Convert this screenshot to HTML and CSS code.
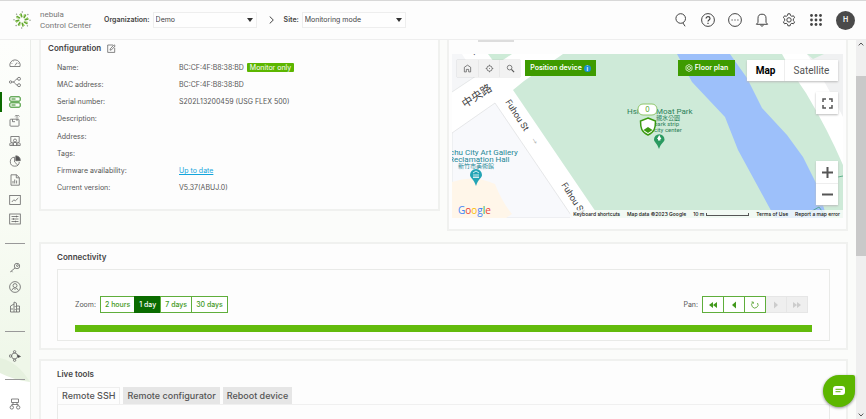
FILE: index.html
```html
<!DOCTYPE html>
<html lang="en">
<head>
<meta charset="utf-8">
<title>Nebula Control Center</title>
<link rel="stylesheet" href="styles.css">
</head>
<body>
<header class="topbar">
  <a class="brand" href="#">
    <svg class="brand-mark" viewBox="0 0 18 18" aria-hidden="true">
      <g stroke-linecap="round" fill="none">
        <g id="ray"><path d="M8.800 5.800L8 3" stroke="#63a82f" stroke-width="1.500"/><path d="M10.800 5.400L11.300 3.400" stroke="#9acb5c" stroke-width=".9"/><circle cx="9.300" cy="1" r=".7" fill="#8a9485"/></g>
        <use href="#ray" transform="rotate(45 9 9)"/><use href="#ray" transform="rotate(90 9 9)"/><use href="#ray" transform="rotate(135 9 9)"/><use href="#ray" transform="rotate(180 9 9)"/><use href="#ray" transform="rotate(225 9 9)"/><use href="#ray" transform="rotate(270 9 9)"/><use href="#ray" transform="rotate(315 9 9)"/>
      </g>
    </svg>
    <span class="brand-name">nebula<br>Control Center</span>
  </a>
  <div class="picker">
    <label for="org">Organization:</label>
    <span class="select-box"><select id="org"><option>Demo</option></select><svg viewBox="0 0 6 4" aria-hidden="true"><path d="M0 0h6L3 4z"/></svg></span>
  </div>
  <svg class="crumb" viewBox="0 0 5 8" aria-hidden="true"><path d="M.7.5L4.300 4 .7 7.500" fill="none" stroke="#444"/></svg>
  <div class="picker">
    <label for="site">Site:</label>
    <span class="select-box"><select id="site"><option>Monitoring mode</option></select><svg viewBox="0 0 6 4" aria-hidden="true"><path d="M0 0h6L3 4z"/></svg></span>
  </div>
  <nav class="actions" aria-label="Account tools">
    <button aria-label="Search"><svg viewBox="0 0 14 14"><circle cx="6.700" cy="5.500" r="4.800"/><path d="M8.800 9.800l2.300 3.500"/></svg></button>
    <button aria-label="Help"><svg viewBox="0 0 14 14"><circle cx="7" cy="7" r="6.400"/><path d="M5.100 5.600c0-2.700 3.900-2.500 3.900-.2C9 7 7 6.900 7 8.600M7 9.800v1.100" stroke-width="1.200"/></svg></button>
    <button aria-label="More"><svg viewBox="0 0 14 14"><circle cx="7" cy="7" r="6.400"/><path d="M3.500 7h1.200M6.400 7h1.200M9.300 7h1.200" stroke-width="1.200"/></svg></button>
    <button aria-label="Notifications"><svg viewBox="0 0 14 14"><path d="M1.400 11.300h11.200L11 9.300V5.200a4 4 0 0 0-8 0v4.100zM5.600 12.200a1.500 1.500 0 0 0 2.800 0"/></svg></button>
    <button aria-label="Settings"><svg viewBox="0 0 14 14"><path d="M5.900.8h2.200l.4 1.700 1.300.8 1.700-.5 1.100 1.900-1.300 1.200v1.800l1.300 1.200-1.100 1.900-1.700-.5-1.300.8-.4 1.700H5.900l-.4-1.700-1.300-.8-1.700.5-1.100-1.900 1.300-1.200V5.900L1.400 4.700l1.100-1.900 1.700.5 1.300-.8z"/><circle cx="7" cy="6.900" r="2.200"/></svg></button>
    <button aria-label="Apps"><svg class="dots" viewBox="0 0 14 14"><circle cx="2.500" cy="2.500" r="1.400"/><circle cx="7" cy="2.500" r="1.400"/><circle cx="11.500" cy="2.500" r="1.400"/><circle cx="2.500" cy="7" r="1.400"/><circle cx="7" cy="7" r="1.400"/><circle cx="11.500" cy="7" r="1.400"/><circle cx="2.500" cy="11.500" r="1.400"/><circle cx="7" cy="11.500" r="1.400"/><circle cx="11.500" cy="11.500" r="1.400"/></svg></button>
    <button class="avatar" aria-label="Profile">H</button>
  </nav>
</header>

<div class="workspace">
  <nav class="sidebar" aria-label="Main">
    <svg class="swoosh" viewBox="0 0 30 379" preserveAspectRatio="none" aria-hidden="true"><path d="M0 318Q18 322 30 342V343Q14 340 0 334z" fill="#e6f1df"/><path d="M0 333Q14 340 30 342V379H0z" fill="#fff"/></svg>
    <div class="nav-group nine">
      <a href="#" aria-label="Dashboard"><svg viewBox="0 0 12 12"><path d="M1 9.500a5.200 5.200 0 1 1 10 0zM6 8.500l2-3M2.600 6.500h.7M4 4.200l.4.4M8.800 6.500h.7"/></svg></a>
      <a href="#" aria-label="Topology"><svg viewBox="0 0 12 12"><circle cx="1.600" cy="6" r="1.200"/><circle cx="10" cy="2.800" r="1.500"/><circle cx="10" cy="9.200" r="1.500"/><path d="M2.800 6h1.400c2 0 2-3.200 4.200-3.200M4.200 6c2 0 2 3.200 4.200 3.200"/></svg></a>
      <a href="#" class="active" aria-label="Devices"><svg viewBox="0 0 12 12"><rect x=".8" y=".8" width="10.400" height="4.400" rx="1"/><rect x=".8" y="6.800" width="10.400" height="4.400" rx="1"/><path d="M2.500 3h4M2.500 9h4" /></svg></a>
      <a href="#" aria-label="Site-wide"><svg viewBox="0 0 12 12"><rect x="1" y="4.200" width="9" height="7" rx=".8"/><path d="M3.500 4.200v2.500h2.500M8 6V3.500M6.800 2.600a1.500 1.500 0 0 1 2.500 0M5.800 1.400a3 3 0 0 1 4.700 0"/></svg></a>
      <a href="#" aria-label="Clients"><svg viewBox="0 0 12 12"><path d="M1.800 7V1.500h8.400V7M.8 10.500V8.500L3.200 7v3.500zM8.800 10.500V7l2.400 1.500v2zM3.200 10.500h5.600M4.500 10.500V7.500h3v3"/><circle cx="6" cy="5.500" r="1.500"/></svg></a>
      <a href="#" aria-label="Usage"><svg viewBox="0 0 12 12"><path d="M5.600 2.200A4.500 4.500 0 1 0 10.300 7M5.600 2.200V7l3.200 3.200"/><path d="M6.800.8a4.900 4.900 0 0 1 4.500 4.900H6.800z" fill="#555"/></svg></a>
      <a href="#" aria-label="Reports"><svg viewBox="0 0 12 12"><path d="M2 .8h5.500L10.300 3.500v7.700H2zM7.300.8v3h3M4 9.500V7M5.700 9.500V5.500M7.600 9.500V6.500" /></svg></a>
      <a href="#" aria-label="Monitor"><svg viewBox="0 0 12 12"><rect x=".7" y="1.500" width="10.600" height="9"/><path d="M2.800 8l2-2.200 1.500 1L9.300 4"/></svg></a>
      <a href="#" aria-label="Configure"><svg viewBox="0 0 12 12"><rect x=".7" y="1" width="10.600" height="10"/><path d="M2.500 3.500h7M2.500 6h7M2.500 8.500h7M7.500 2.700v1.600M4.500 5.200v1.600M6.500 7.700v1.600"/></svg></a>
    </div>
    <div class="nav-group three">
      <a href="#" aria-label="Licences"><svg viewBox="0 0 12 12"><circle cx="8" cy="4" r="2.700"/><circle cx="8.400" cy="3.600" r=".9"/><path d="M6 6L1.200 10M2.500 9l1 1.200"/></svg></a>
      <a href="#" aria-label="Account"><svg viewBox="0 0 12 12"><circle cx="6" cy="6" r="5.400"/><circle cx="6" cy="4.600" r="2"/><path d="M2.600 9.500L4.500 7 6 8.500 7.500 7l1.900 2.500"/></svg></a>
      <a href="#" aria-label="Organization"><svg viewBox="0 0 12 12"><path d="M1.500 11V5L5 3v8M5 3l.1-2 2.400 1.200V11M7.500 5H10.500v6H1.500M3 7v2M6.200 5v1M6.200 8v1M9 7v2"/></svg></a>
    </div>
    <div class="nav-group one">
      <a href="#" aria-label="Community"><svg viewBox="0 0 12 12"><circle cx="5.600" cy="6" r="3"/><circle cx="5.600" cy="1.800" r="1.200"/><circle cx="1.400" cy="6" r="1.200"/><circle cx="5.600" cy="10.200" r="1.200"/><path d="M8.500 4.800l3 1.700-2.500 1z" fill="#333"/></svg></a>
    </div>
    <div class="nav-group one last">
      <a href="#" aria-label="Network"><svg viewBox="0 0 12 12"><path d="M2.500 1h7v3.500h-7zM4 4.500v2H2.800v1.200M8 4.500v2h1.200v1.200M4 6.500h4"/><circle cx="2.800" cy="9.400" r="1.700"/><circle cx="9.200" cy="9.400" r="1.700"/></svg></a>
    </div>
  </nav>

  <main class="content">
    <div class="columns">
      <section class="card config">
        <h2>Configuration <button class="edit" aria-label="Edit"><svg viewBox="0 0 9 9"><path d="M6 1H.7v7.400h7V3.800M3 6.200l.3-1.400L7 .8l1.200 1L4.500 5.800z"/></svg></button></h2>
        <dl class="facts">
          <dt>Name:</dt><dd>BC:CF:4F:B8:38:BD <span class="tag">Monitor only</span></dd>
          <dt>MAC address:</dt><dd>BC:CF:4F:B8:38:BD</dd>
          <dt>Serial number:</dt><dd>S202L13200459 (USG FLEX 500)</dd>
          <dt>Description:</dt><dd></dd>
          <dt>Address:</dt><dd></dd>
          <dt>Tags:</dt><dd></dd>
          <dt>Firmware availability:</dt><dd><a href="#">Up to date</a></dd>
          <dt>Current version:</dt><dd>V5.37(ABUJ.0)</dd>
        </dl>
      </section>

      <section class="card map-card">
        <div class="tab-edge"></div>
        <div class="map">
          <svg class="terrain" viewBox="0 0 391 164" preserveAspectRatio="xMidYMid slice" role="img" aria-label="Map of the device location">
            <rect width="391" height="164" fill="#fff"/>
            <path d="M0 0H10L24 22 0 38z" fill="#f5f6f8"/>
            <path d="M0 79L43 49 121 164H0z" fill="#f8f9fc" stroke="#dcdee0" stroke-width=".7"/>
            <path d="M0 38L30 18" stroke="#dcdee0" stroke-width=".7"/>
            <path d="M0 128Q22 120 43 130Q50 148 60 160L54 164H0z" fill="#fff6e9"/>
            <path d="M36 0H60L48 8H42z" fill="#cdebd7"/>
            <path d="M111 0H330Q342 22 354 39Q376 76 391 111V164H148L61 36 72 27z" fill="#ceead8"/>
            <path d="M355 0H391V63Q374 28 355 0z" fill="#f0f1f2"/>
            <path d="M355 0H372L361 5z" fill="#ceead8"/>
            <path d="M225 0H278L295 24 310 54 335 81 351 103 364 129 375 164H323L286 96 273 63 240 28z" fill="#9dc0fa"/>
            <path d="M350 160q9-1 17-7l5 7M386 123l5-1" fill="none" stroke="#33996b" stroke-width=".7"/>
            <g class="road-text">
              <text transform="translate(13 54) rotate(-33)" font-size="11">中央路</text>
              <text transform="translate(53 48) rotate(57)">Fuhou St</text>
              <text transform="translate(109 131) rotate(57)">Fuhou St</text>
              <text transform="translate(21 -1) rotate(57)">t</text>
              <text class="arrow" transform="translate(79 86) rotate(57)">→</text>
            </g>
            <g class="poi-text gallery">
              <text x="-2" y="101">chu City Art Gallery</text>
              <text x="-3" y="108">Reclamation Hall</text>
              <text class="minor" x="6" y="114">新竹市美術館</text>
            </g>
            <g class="poi-text park">
              <text x="175" y="60">Hsi</text>
              <text x="204" y="60">Moat Park</text>
              <text class="minor" x="204" y="66">親水公園</text>
              <text class="minor" x="202" y="72">park strip</text>
              <text class="minor" x="202" y="78">city center</text>
            </g>
            <path d="M24 132C22 125 18 124 18 121a6 6 0 0 1 12 0c0 3-4 4-6 11z" fill="#23a4b5"/><path d="M21 119l3-2 3 2M22 120v3M24 120v3M26 120v3M21 123.500h6" stroke="#fff" stroke-width=".8" fill="none"/>
            <path d="M207 95C205 89 202 88 202 85.500a5 5 0 0 1 10.500 0c0 2.500-3.500 3.500-5.500 9.500z" fill="#2a9a60"/><path d="M207.200 81l2.200 4h-1v1.500h-2.400V85h-1z" fill="#fff"/>
            <path d="M196 64l7.500 3c0 7-1 11-7.500 14-6.500-3-7.500-7-7.500-14z" fill="#fff" stroke="#3b9a10" stroke-width="1.500"/><path d="M191.500 76l4.500-3 4.500 3-4.500 3z" fill="#3b9a10"/>
            <rect x="186" y="50" width="19" height="11" rx="5" fill="#fff" stroke="#8fc66c"/><text class="count" x="195.500" y="58" text-anchor="middle">0</text>
          </svg>
          <div class="map-tools">
            <button aria-label="Home"><svg viewBox="0 0 10 10"><path d="M1.500 8.800V3.600L5 1.300l3.500 2.300v5.200H6.300V6H3.700v2.800z"/></svg></button>
            <button aria-label="Locate"><svg viewBox="0 0 10 10"><circle cx="5" cy="5" r="3"/><path d="M5 .8V2M5 8v1.200M.8 5H2M8 5h1.200M4.500 5h1"/></svg></button>
            <button aria-label="Search map"><svg viewBox="0 0 10 10"><circle cx="4" cy="4" r="2.600"/><path d="M6 6l3 3" stroke-width="1.300"/></svg></button>
          </div>
          <button class="green position">Position device <span class="info">i</span></button>
          <button class="green floor"><svg viewBox="0 0 8 8"><path d="M4 .5l3 1.700v3.600L4 7.500 1 5.800V2.200z"/><circle cx="4" cy="4" r="1.500"/></svg>Floor plan</button>
          <div class="map-type"><button class="on">Map</button><button>Satellite</button></div>
          <button class="map-square full" aria-label="Full screen"><svg viewBox="0 0 11 11"><path d="M1 4V1h3M7 1h3v3M10 7v3H7M4 10H1V7"/></svg></button>
          <div class="map-zoom">
            <button aria-label="Zoom in"><svg viewBox="0 0 11 11"><path d="M0 5.500h11M5.500 0v11"/></svg></button>
            <button aria-label="Zoom out"><svg viewBox="0 0 11 11"><path d="M0 5.500h11"/></svg></button>
          </div>
          <div class="google"><span class="b">G</span><span class="r">o</span><span class="y">o</span><span class="b">g</span><span class="g">l</span><span class="r">e</span></div>
          <div class="credits"><a href="#">Keyboard shortcuts</a><span>Map data ©2023 Google</span><span class="scale">10 m<i></i></span><a href="#">Terms of Use</a><a href="#">Report a map error</a></div>
        </div>
      </section>
    </div>

    <section class="card connectivity">
      <h2>Connectivity</h2>
      <div class="box">
        <div class="controls">
          <span class="caption">Zoom:</span>
          <div class="segments"><button>2 hours</button><button class="on">1 day</button><button>7 days</button><button>30 days</button></div>
          <span class="caption pan">Pan:</span>
          <div class="segments icons">
            <button aria-label="Oldest"><svg viewBox="0 0 10 8"><path d="M5 1v6L1 4zM9 1v6L5 4z"/></svg></button>
            <button aria-label="Earlier"><svg viewBox="0 0 10 8"><path d="M7 .5v7L3 4z"/></svg></button>
            <button aria-label="Refresh"><svg viewBox="0 0 10 8"><path d="M3 1.200A3.200 3.200 0 1 0 7.500 2M1.500 1h1.800v1.800" fill="none" stroke="#5fa63a" stroke-width=".9"/></svg></button>
            <button disabled aria-label="Later"><svg viewBox="0 0 10 8"><path d="M3 .5v7L7 4z"/></svg></button>
            <button disabled aria-label="Newest"><svg viewBox="0 0 10 8"><path d="M1 1v6l4-3zM5 1v6l4-3z"/></svg></button>
          </div>
        </div>
        <div class="uptime"></div>
      </div>
    </section>

    <section class="card tools">
      <h2>Live tools</h2>
      <div class="tabs" role="tablist"><button role="tab" class="on">Remote SSH</button><button role="tab">Remote configurator</button><button role="tab">Reboot device</button></div>
      <div class="tab-body"></div>
    </section>
  </main>

  <div class="scrollbar" aria-hidden="true">
    <svg viewBox="0 0 6 4"><path d="M.7 3.400L3 1l2.300 2.400"/></svg>
    <div class="track"><div class="thumb"></div></div>
    <svg viewBox="0 0 6 4"><path d="M.7.600L3 3 5.300.600"/></svg>
  </div>
  <button class="chat" aria-label="Chat"><svg viewBox="0 0 14 12"><path d="M4 1h6a3 3 0 0 1 3 3v3a3 3 0 0 1-3 3H1V4a3 3 0 0 1 3-3z" fill="#fff"/><path d="M3.500 4.300h7M3.500 6.700h5" stroke="#5cb600" stroke-width="1"/></svg></button>
</div>
</body>
</html>
```
FILE: styles.css
```css
* { box-sizing: border-box; }
body {
  margin: 0;
  height: 100vh;
  display: flex;
  flex-direction: column;
  overflow: hidden;
  background: #fbfcfa;
  color: #555;
  font: 7px/10px Inter, "Noto Sans CJK TC", sans-serif;
}
button, select { font: inherit; color: inherit; margin: 0; padding: 0; border: 0; background: none; }
svg { display: block; flex: none; }
h2, dl, dd { margin: 0; }

.topbar {
  flex: none;
  height: 40px;
  display: flex;
  align-items: center;
  padding: 0 11px 0 13px;
  background: #fdfdfd;
  border-top: 1px solid #d8d8d8;
  border-bottom: 1px solid #eee;
}
.brand { display: flex; align-items: center; gap: 9px; width: 91px; color: #777; text-decoration: none; }
.brand-mark { width: 18px; height: 18px; }
.brand-name { font: 8px/11px Roboto, sans-serif; white-space: nowrap; }
.picker { display: flex; align-items: center; gap: 3px; }
.picker label { font-weight: 600; color: #444; }
.select-box { position: relative; }
.select-box select {
  display: block;
  appearance: none;
  width: 104px;
  height: 16px;
  padding: 0 2px;
  border: 1px solid #eee;
  background: #fefefe;
  color: #444;
}
.select-box svg { position: absolute; right: 4px; top: 6px; width: 6px; height: 4px; fill: #333; }
.crumb { width: 5px; height: 8px; margin: 0 10px 0 12px; }
.actions { display: flex; align-items: center; gap: 13px; margin-left: auto; }
.actions svg { width: 14px; height: 14px; fill: none; stroke: #444; stroke-width: 1; }
.actions .dots { fill: #444; stroke: none; }
.avatar { width: 19px; height: 19px; border-radius: 50%; background: #4a4a4a; color: #fff; font-weight: 600; }

.workspace { position: relative; flex: 1; min-height: 0; display: flex; }
.sidebar {
  position: relative;
  flex: none;
  width: 31px;
  padding: 13px 5px 0;
  border-right: 1px solid #e9ece8;
  background: linear-gradient(#fdfefc, #f9fcf5 45%, #eff7e9 85%);
}
.swoosh { position: absolute; left: 0; top: 0; width: 100%; height: 100%; }
.nav-group { position: relative; display: grid; grid-auto-rows: 1fr; margin-bottom: 14px; }
.nav-group + .nav-group { padding-top: 14px; border-top: 1px solid #999; }
.nine { height: 176px; }
.three { height: 74px; }
.one { height: 34px; }
.nav-group a { display: grid; place-items: center; }
.nav-group svg { width: 12px; height: 12px; fill: none; stroke: #666; stroke-width: .8; }
.nav-group .active { margin: 0 -5px; border-left: 2px solid #0b6a00; padding-right: 2px; }
.nav-group .active svg { stroke: #2d8a1d; stroke-width: 1; }

.content { flex: 1; min-width: 0; overflow: hidden; padding: 0 8px; }
.columns { display: grid; grid-template-columns: 1fr 1fr; gap: 7px; align-items: start; margin-bottom: 11px; }
.card { background: #fdfdfd; border: 2px solid #f0f1ef; }
.card h2 { display: flex; align-items: center; font-size: 8px; line-height: 12px; font-weight: 600; color: #444; }
.config { border-top: 0; padding: 2px 7px 12px; }
.edit { margin-left: 6px; }
.edit svg { width: 9px; height: 9px; fill: none; stroke: #555; stroke-width: .7; }
.facts {
  display: grid;
  grid-template-columns: 122px 1fr;
  grid-template-rows: repeat(8, 1fr);
  align-items: center;
  height: 138px;
  margin: 5px 9px 0;
}
.facts a { color: #13a5dc; text-underline-offset: 1px; }
.tag { display: inline-block; margin-left: 1px; padding: 0 3px; line-height: 9px; border-radius: 1px; background: #5cb600; color: #fff; }

.map-card { border-top: 0; padding: 0 3px 11px; }
.tab-edge { width: 36px; height: 2px; margin: 0 0 12px 26px; background: #ddd; }
.map { position: relative; height: 164px; overflow: hidden; }
.terrain { width: 100%; height: 100%; }
.road-text { font: 9px Roboto, "Noto Sans CJK TC", sans-serif; fill: #444; }
.poi-text { font: 8px/1 Roboto, "Noto Sans CJK TC", sans-serif; }
.poi-text .minor { font-size: 6px; }
.arrow { font-size: 6px; fill: #999; }
.gallery { fill: #1d8796; }
.park { fill: #2b8158; }
.count { font: 7px Inter, sans-serif; fill: #4ba022; }
.map-tools, .map-type, .map-zoom, .map-square, .green { position: absolute; }
.map-tools { left: 5px; top: 6px; display: flex; background: #f2f2f2; box-shadow: 0 0 1px #aaa; }
.map-tools button { width: 21px; height: 17px; display: grid; place-items: center; }
.map-tools button + button { border-left: 1px solid #e8e8e8; }
.map-tools svg { width: 9px; height: 9px; fill: none; stroke: #555; stroke-width: .8; }
.green { top: 6px; height: 16px; display: flex; align-items: center; justify-content: center; gap: 2px; background: #3e9b00; color: #fff; font-weight: 600; white-space: nowrap; }
.position { left: 73px; width: 71px; }
.floor { left: 226px; width: 57px; }
.floor svg { width: 8px; height: 8px; fill: none; stroke: #fff; stroke-width: .7; }
.info { width: 7px; height: 7px; border-radius: 50%; background: #1d91d4; font-size: 6px; line-height: 7px; }
.map-type { right: 5px; top: 6px; display: flex; background: #fff; box-shadow: 0 1px 2px #bbb; font: 10px/21px Roboto, sans-serif; }
.map-type button { width: 53px; height: 21px; }
.map-type .on { width: 38px; font-weight: 700; color: #000; border-right: 1px solid #eee; }
.map-square, .map-zoom button { width: 22px; height: 22px; display: grid; place-items: center; background: #fff; }
.map-square, .map-zoom { right: 5px; box-shadow: 0 1px 2px #bbb; }
.full { top: 38px; }
.map-zoom { bottom: 13px; }
.map-zoom button + button { border-top: 1px solid #eee; }
.map-square svg, .map-zoom svg { width: 11px; height: 11px; fill: none; stroke: #555; stroke-width: 2; }
.map-square svg { stroke-width: 1.5; }
.google { position: absolute; left: 6px; bottom: 2px; font: 500 10px/12px "Open Sans", sans-serif; }
.b { color: #4285f4; } .r { color: #ea4335; } .y { color: #fbbc05; } .g { color: #34a853; }
.credits { position: absolute; right: 0; bottom: 0; display: flex; gap: 7px; padding: 0 3px; background: rgba(250, 252, 250, .8); color: #111; font-size: 5px; line-height: 8px; white-space: nowrap; font-weight: 500; }
.credits a { color: inherit; text-decoration: none; }
.scale { display: flex; gap: 2px; align-items: center; }
.scale i { width: 43px; height: 3px; border: 1px solid #555; border-top: 0; }

.connectivity { padding: 7px 16px 7px; margin-bottom: 9px; }
.box { height: 72px; margin-top: 6px; padding: 26px 17px 0; border: 1px solid #e9eae8; }
.controls { display: flex; align-items: center; height: 17px; }
.caption { margin-right: 4px; }
.pan { margin-left: auto; }
.segments { display: flex; color: #42991c; font-weight: 500; }
.segments button { height: 17px; padding: 0 4px; border: 1px solid #5fae3b; background: #fff; }
.segments button + button { margin-left: -1px; }
.segments .on { background: #0a6b00; border-color: #0a6b00; color: #fff; }
.icons { margin-right: 4px; }
.icons button { position: relative; z-index: 1; width: 22px; padding: 0; display: grid; place-items: center; fill: #42991c; }
.icons svg { width: 10px; height: 8px; }
.icons button:disabled { z-index: 0; background: #efefef; border-color: #e6e6e6; fill: #ccc; }
.uptime { height: 7px; margin-top: 12px; background: #63bb0c; }

.tools { padding: 7px 16px 0; height: 120px; }
.tabs { display: flex; gap: 3px; margin-top: 7px; font-size: 9px; font-weight: 500; color: #555; }
.tabs button { height: 17px; padding: 0 4px; background: #e6e6e6; white-space: nowrap; }
.tabs .on { background: #fdfdfd; border: 1px solid #eee; border-bottom: 0; }
.tab-body { height: 80px; border: 1px solid #e9eae8; border-top-color: #f0f0f0; }

.scrollbar { flex: none; width: 10px; display: flex; flex-direction: column; align-items: center; gap: 4px; padding: 2px 0; background: #efefef; }
.scrollbar svg { width: 6px; height: 4px; fill: none; stroke: #555; }
.track { flex: 1; width: 100%; }
.thumb { height: 50%; margin-top: 26px; background: #c9c9c9; }
.chat {
  position: absolute;
  right: 11px;
  bottom: 12px;
  width: 32px;
  height: 32px;
  display: grid;
  place-items: center;
  border-radius: 50% 2px 50% 50%;
  background: #5cb600;
  box-shadow: 0 1px 3px #888;
}
.chat svg { width: 14px; height: 12px; }
```
